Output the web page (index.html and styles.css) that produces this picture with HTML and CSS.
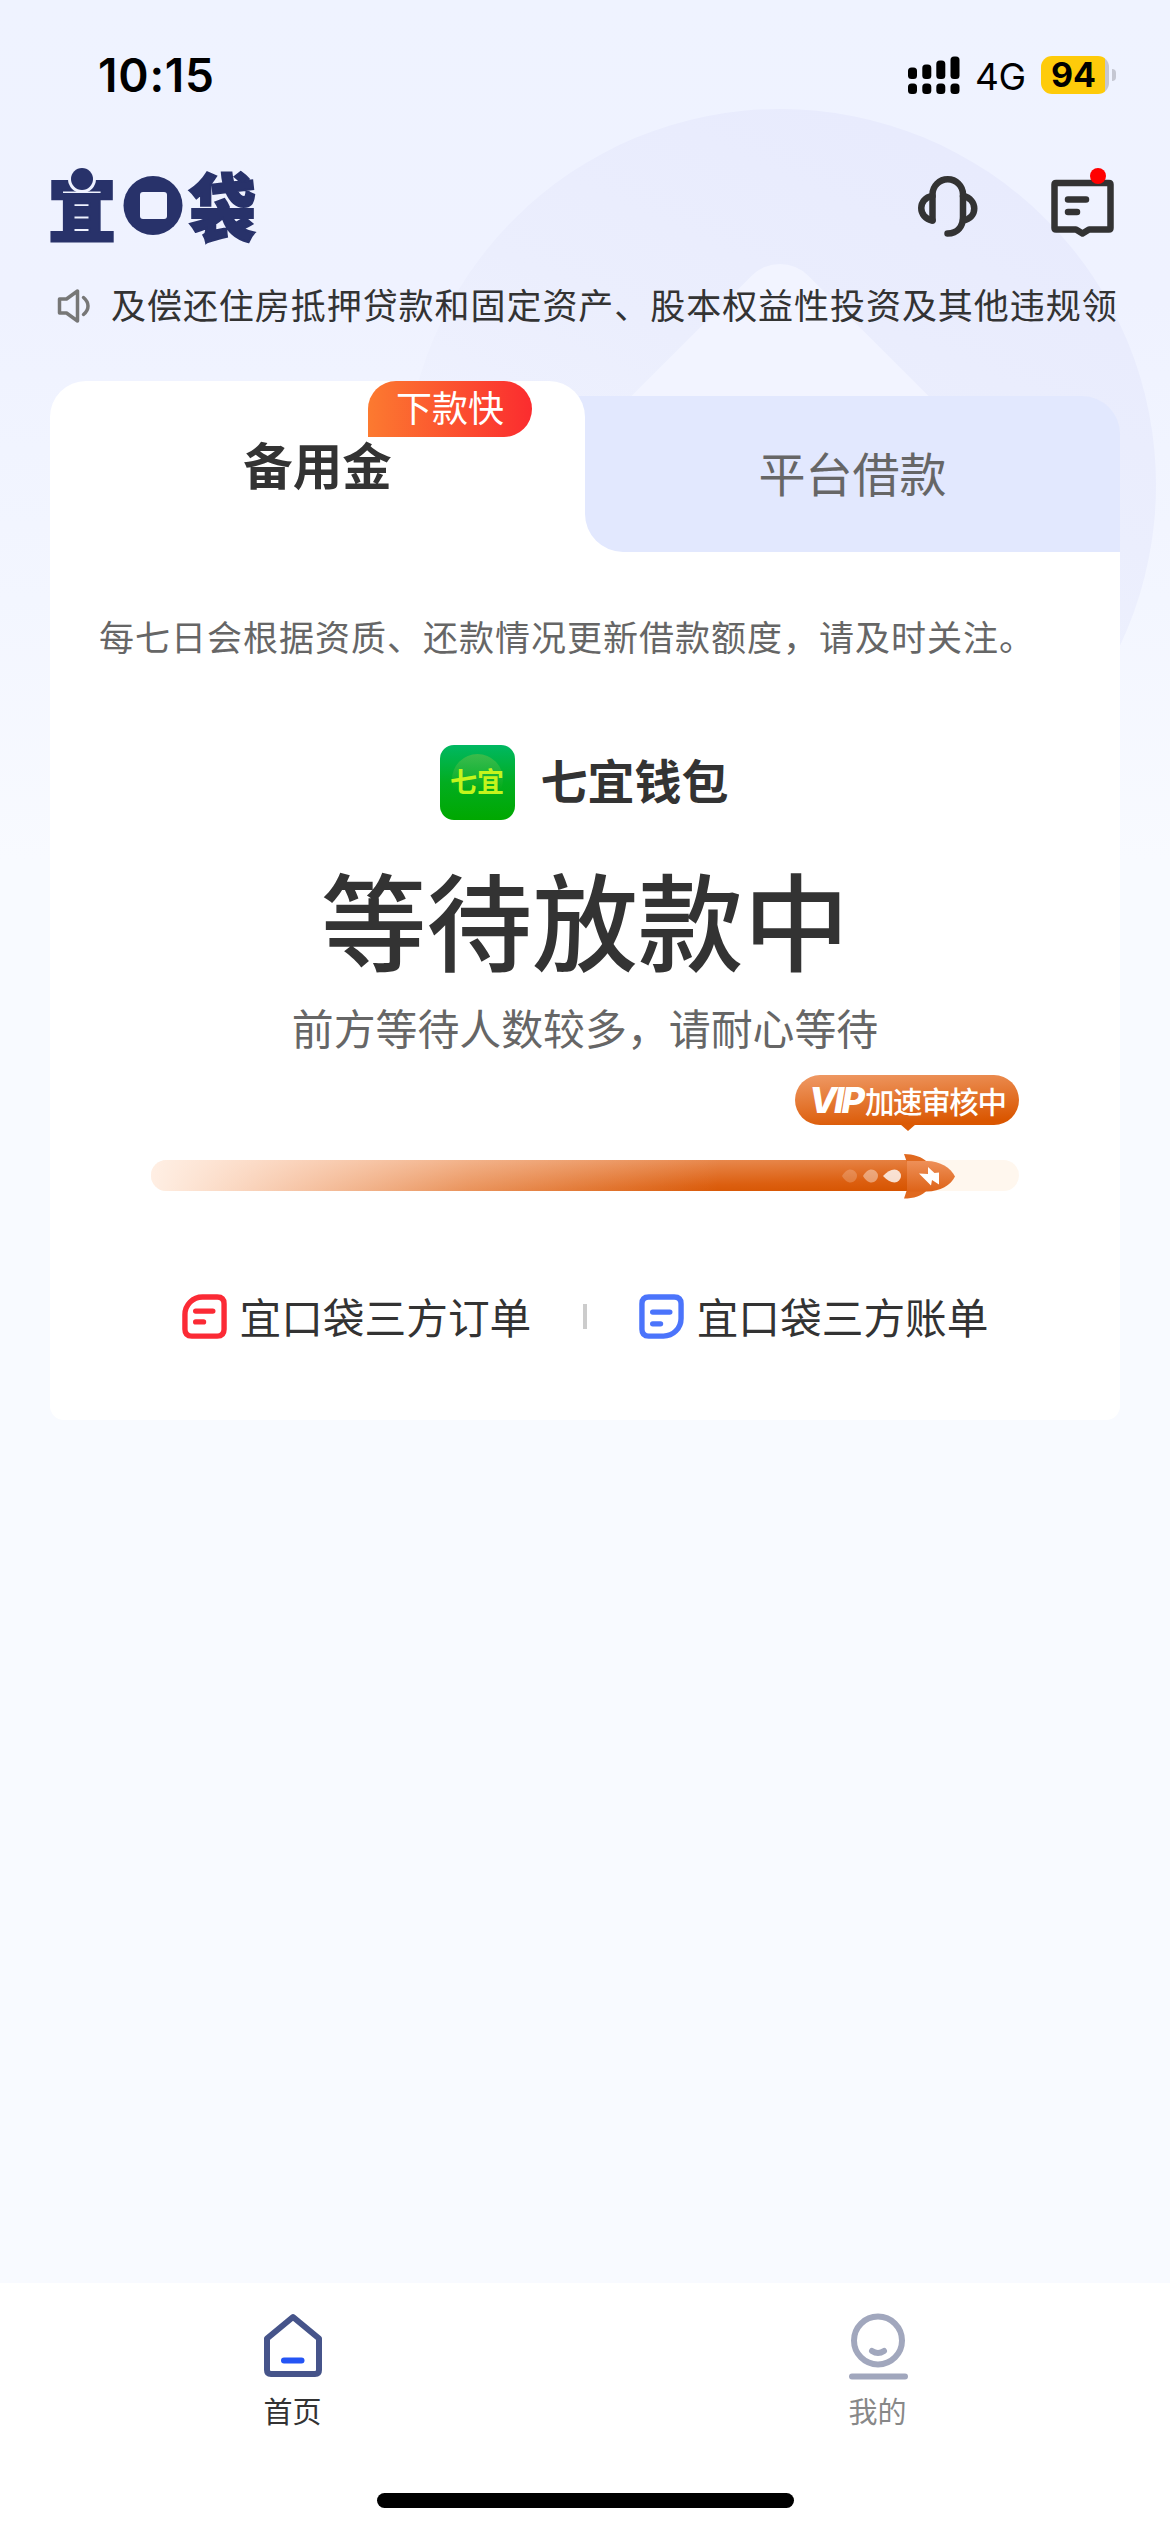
FILE: index.html
```html
<!DOCTYPE html>
<html lang="zh-CN">
<head>
<meta charset="utf-8">
<title>宜口袋</title>
<link rel="stylesheet" href="styles.css">
</head>
<body>
<div class="screen">
  <svg class="backdrop" width="760" height="760" viewBox="0 0 760 760" aria-hidden="true">
    <defs>
      <linearGradient id="disc" x1="0.6" y1="0" x2="0.25" y2="0.75">
        <stop offset="0" stop-color="#e8ebfd"/>
        <stop offset="0.45" stop-color="#ebeefd"/>
        <stop offset="1" stop-color="#f1f4ff"/>
      </linearGradient>
    </defs>
    <circle cx="380" cy="380" r="376" fill="url(#disc)"/>
    <rect x="212" y="212" width="320" height="320" rx="40" fill="#f2f4ff" transform="rotate(45 380 380)"/>
  </svg>

  <header class="status">
    <span class="time">10:15</span>
    <div class="status-right">
      <svg width="52" height="38" viewBox="0 0 52 38">
        <rect x="0" y="11.500" width="9" height="11.500" rx="3.500"/>
        <rect x="14.300" y="8.500" width="9" height="14.500" rx="3.500"/>
        <rect x="28.300" y="4.500" width="9" height="18.500" rx="3.500"/>
        <rect x="42.500" y="0.500" width="9" height="22.500" rx="3.500"/>
        <rect x="0" y="27.500" width="9" height="10.500" rx="3.500"/>
        <rect x="14.300" y="27.500" width="9" height="10.500" rx="3.500"/>
        <rect x="28.300" y="27.500" width="9" height="10.500" rx="3.500"/>
        <rect x="42.500" y="27.500" width="9" height="10.500" rx="3.500"/>
      </svg>
      <span class="network">4G</span>
      <span class="battery">94</span>
      <span class="battery-tip"></span>
    </div>
  </header>

  <div class="topbar">
    <svg class="logo" width="206" height="76" viewBox="0 0 206 76" role="img" aria-label="宜口袋">
      <text class="logo-text" transform="translate(-2 68) scale(1.02 1.08)">宜</text>
      <circle cx="32" cy="11" r="14" fill="#eff2ff"/>
      <circle cx="32" cy="11" r="11"/>
      <circle cx="103" cy="37.500" r="29.500"/>
      <rect x="90" y="24" width="27" height="27" rx="3" fill="#eff2ff"/>
      <text class="logo-text" transform="translate(139 67) scale(1 1.08)">袋</text>
    </svg>
    <div class="actions">
      <svg width="59" height="60" viewBox="0 0 59 60" class="line-icon">
        <path d="M14.500 44.500V18.500a15.250 15.250 0 0 1 30.500 0V41c0 9-5 16.500-15.500 16.500"/>
        <path d="M14.500 20C-0.500 22-0.500 42 14.500 44.500M45 20c15 3 15 22 0 24.500"/>
      </svg>
      <div class="message">
        <svg width="63" height="56" viewBox="0 0 63 56" class="line-icon">
          <path d="M5 3h53q1.500 0 1.500 1.500V48q0 1.500-1.500 1.500H38l-6.500 4-6.500-4H5Q3.500 49.500 3.500 48V4.500Q3.500 3 5 3z"/>
          <path d="M17 19.500h18M17 32h9"/>
        </svg>
        <span class="dot"></span>
      </div>
    </div>
  </div>

  <div class="notice">
    <svg width="36" height="34" viewBox="0 0 36 34">
      <path d="M2.500 10h7L20.500 2v30L9.500 24h-7z"/>
      <path d="M26.500 8.500c6 5 6 12 0 17"/>
    </svg>
    <span>及偿还住房抵押贷款和固定资产、股本权益性投资及其他违规领</span>
  </div>

  <main class="card">
    <nav class="tabs">
      <div class="tab tab-active">备用金<span class="badge">下款快</span></div>
      <div class="tab-slot"><div class="tab tab-other">平台借款</div></div>
    </nav>
    <section class="panel">
      <p class="tip">每七日会根据资质、还款情况更新借款额度，请及时关注。</p>
      <div class="product">
        <div class="product-icon"><span>七宜</span></div>
        <strong>七宜钱包</strong>
      </div>
      <h1>等待放款中</h1>
      <p class="sub">前方等待人数较多，请耐心等待</p>
      <div class="progress">
        <div class="bubble"><b>VIP</b><span>加速审核中</span></div>
        <div class="track">
          <div class="fill">
            <svg width="60" height="14" viewBox="0 0 60 14" fill="#fff">
              <path opacity=".2" d="M0 7C2.500 3 5 .5 8.500 .5a6.500 6.500 0 0 1 0 13C5 13.500 2.500 11 0 7z"/>
              <path opacity=".4" d="M21 7c2.500-4 5-6.500 8.500-6.500a6.500 6.500 0 0 1 0 13C26 13.500 23.500 11 21 7z"/>
              <path opacity=".8" d="M41 7c4-4 7.500-6.500 11.500-6.500a6.500 6.500 0 0 1 0 13C48.500 13.500 45 11 41 7z"/>
            </svg>
          </div>
          <svg class="rocket" width="53" height="46" viewBox="0 0 53 46">
            <defs>
              <linearGradient id="hull" x1="0" y1="0" x2="0" y2="1">
                <stop offset="0" stop-color="#ee9058"/>
                <stop offset="1" stop-color="#de6318"/>
              </linearGradient>
            </defs>
            <path fill="#e0691f" d="M1 1c9 0 19 3 23 8v28c-4 6-14 8.500-23 8.500l3-9v-27z"/>
            <path fill="url(#hull)" d="M4 8h20c13 0 24 7 28 15.500C48 32 37 38.500 24 38.500H4z"/>
            <path fill="#fff" d="M16 20.500l9 .5V14l6.500 6 4.500-.5v12l-7-4.500-1 5.500z"/>
          </svg>
        </div>
      </div>
      <div class="links">
        <a class="link">
          <svg width="45" height="45" viewBox="0 0 46 46" class="order">
            <path d="M21 3h15q7 0 7 7v26q0 7-7 7H10q-7 0-7-7V21A18 18 0 0 1 21 3z"/>
            <path d="M14 17.500h17.500M14 28.500h8"/>
          </svg>
          <span>宜口袋三方订单</span>
        </a>
        <i class="divider"></i>
        <a class="link">
          <svg width="45" height="45" viewBox="0 0 46 46" class="bill">
            <path d="M10 3h26q7 0 7 7v15A18 18 0 0 1 25 43H10q-7 0-7-7V10q0-7 7-7z"/>
            <path d="M14 18.500h17.500M14 30.500h8"/>
          </svg>
          <span>宜口袋三方账单</span>
        </a>
      </div>
    </section>
  </main>

  <footer class="tabbar">
    <div class="tabbar-items">
      <div class="item item-on">
        <svg width="64" height="68" viewBox="0 0 64 68">
          <path d="M6 25.500L32 4 58 25.500V57q0 4-4 4H10Q6 61 6 57z" stroke="#46548a"/>
          <path d="M23 47.500h17.500" stroke="#2454f5"/>
        </svg>
        <span>首页</span>
      </div>
      <div class="item">
        <svg width="64" height="68" viewBox="0 0 64 68" stroke="#a1a7bd">
          <circle cx="32" cy="27.500" r="24"/>
          <path d="M26 38q6 4 12 0M6 63.500h53"/>
        </svg>
        <span>我的</span>
      </div>
    </div>
    <div class="home-indicator"></div>
  </footer>
</div>
</body>
</html>
```
FILE: styles.css
```css
* { box-sizing: border-box; }

body {
  margin: 0;
  font-family: "Noto Sans CJK SC", sans-serif;
  color: #333;
}

.screen {
  position: relative;
  display: flex;
  flex-direction: column;
  width: 1170px;
  height: 2532px;
  overflow: hidden;
  background: linear-gradient(180deg, #eff3ff 0, #eff2ff 300px, #f3f6ff 600px, #f8faff 860px);
}

.screen > * { position: relative; }

.screen > .backdrop {
  position: absolute;
  left: 400px;
  top: 105px;
}

svg { display: block; overflow: visible; }

.status {
  display: flex;
  justify-content: space-between;
  align-items: center;
  height: 150px;
  padding: 0 54px 0 98px;
  font-family: Inter, sans-serif;
  color: #000;
}

.time { font-size: 46px; font-weight: 600; letter-spacing: 0.8px; }

.status-right { display: flex; align-items: center; }

.network { width: 66px; padding-left: 15px; font-size: 37px; letter-spacing: -0.5px; margin-right: 15px; margin-top: 2px; }

.battery {
  width: 68px;
  height: 38px;
  padding-right: 3px;
  border-radius: 11px;
  background: linear-gradient(90deg, #fecb0a 64px, #c5c7d2 64px);
  font-size: 34px;
  font-weight: 700;
  line-height: 38px;
  text-align: center;
}

.battery-tip {
  width: 4px;
  height: 12px;
  margin-left: 3px;
  border-radius: 0 6px 6px 0;
  background: #c5c7d2;
}

.topbar {
  display: flex;
  justify-content: space-between;
  height: 126px;
  padding: 18px 56px 0 50px;
}

.logo { fill: #28326a; }
.logo-text { font-size: 67px; font-weight: 900; stroke: #28326a; stroke-width: 2px; }

.actions { display: flex; gap: 74px; padding-top: 8px; }

.line-icon {
  fill: none;
  stroke: #333;
  stroke-width: 6.5px;
  stroke-linecap: round;
  stroke-linejoin: round;
}

.message { position: relative; padding-top: 4px; }

.dot {
  position: absolute;
  top: -8px;
  right: 8px;
  width: 16px;
  height: 16px;
  border-radius: 50%;
  background: #f00;
}

.notice {
  display: flex;
  align-items: center;
  gap: 18px;
  height: 60px;
  padding-left: 57px;
  font-size: 35px;
  letter-spacing: 0.95px;
  line-height: 56px;
  white-space: nowrap;
}

.notice span { height: 60px; }

.notice svg {
  fill: none;
  stroke: #777;
  stroke-width: 3.5px;
  stroke-linecap: round;
  stroke-linejoin: round;
}

.card {
  display: flex;
  flex-direction: column;
  width: 1070px;
  height: 1039px;
  margin: 45px 50px 0;
}

.tabs {
  display: grid;
  grid-template-columns: 535px 535px;
  align-items: end;
  height: 171px;
  background: linear-gradient(#e2e8fe, #e2e8fe) 400px 15px / 200px 80px no-repeat;
}

.tab { text-align: center; font-size: 47px; }

.tab-active {
  position: relative;
  height: 171px;
  border-radius: 36px 36px 0 0;
  background: #fff;
  font-size: 49.5px;
  font-weight: 700;
  line-height: 165px;
}

.tab-slot { background: linear-gradient(#fff, #fff) 0 100% / 100px 50px no-repeat; }

.tab-other {
  height: 156px;
  border-radius: 0 38px 0 38px;
  background: #e2e8fe;
  color: #666;
  line-height: 151px;
}

.badge {
  position: absolute;
  left: 318px;
  top: 0;
  width: 164px;
  height: 56px;
  border-radius: 28px 28px 28px 0;
  background: linear-gradient(90deg, #fc7a30, #fb2c2f);
  color: #fff;
  font-size: 36px;
  font-weight: 400;
  line-height: 51px;
}

.panel {
  flex: 1;
  display: flex;
  flex-direction: column;
  align-items: center;
  border-radius: 0 0 14px 14px;
  background: #fff;
}

.tip {
  align-self: stretch;
  margin: 54px 0 0 49px;
  font-size: 35px;
  letter-spacing: 1px;
  line-height: 60px;
  color: #666;
  white-space: nowrap;
}

.product {
  display: flex;
  align-items: center;
  gap: 26px;
  margin: 78px 2px 0 0;
  font-size: 47px;
  line-height: 69px;
}

.product strong { height: 77px; font-weight: 700; }

.product-icon {
  width: 75px;
  height: 75px;
  padding: 9px 12px;
  border-radius: 14px;
  background: linear-gradient(180deg, #00b862 0, #02ad20 50%, #00a800 100%);
}

.product-icon span {
  display: flex;
  justify-content: center;
  width: 51px;
  height: 51px;
  border-radius: 50%;
  background: linear-gradient(180deg, rgba(90, 190, 70, 0.65), rgba(60, 180, 40, 0) 70%);
  color: #c4f51c;
  font-size: 27px;
  font-weight: 700;
  line-height: 53px;
  white-space: nowrap;
}

h1 {
  margin: 31px 0 0;
  font-size: 105.6px;
  font-weight: 500;
  line-height: 130px;
}

.sub {
  margin: 12px 0 0;
  font-size: 41.9px;
  line-height: 66px;
  color: #666;
}

.progress {
  display: flex;
  flex-direction: column;
  align-items: flex-end;
  width: 868px;
  margin-top: 15px;
}

.bubble {
  position: relative;
  display: flex;
  align-items: center;
  width: 224px;
  height: 50px;
  padding-left: 14px;
  border-radius: 25px;
  background: linear-gradient(176deg, #ef9a66 0, #da5600 90%);
  color: #fff;
  white-space: nowrap;
}

.bubble::after {
  content: "";
  position: absolute;
  left: 105px;
  top: 49px;
  border: 8px solid transparent;
  border-top: 7px solid #db5a05;
  border-bottom: 0;
}

.bubble b {
  width: 56px;
  font: italic 800 36px/50px Inter, sans-serif;
  letter-spacing: -2.8px;
}

.bubble span { font-size: 29.5px; line-height: 47px; letter-spacing: -1.4px; font-weight: 500; }

.track {
  display: flex;
  align-items: center;
  align-self: stretch;
  height: 31px;
  margin-top: 35px;
  border-radius: 16px;
  background: #fff7ee;
}

.fill {
  display: flex;
  align-items: center;
  justify-content: flex-end;
  width: 757px;
  height: 31px;
  padding-right: 6px;
  border-radius: 16px 0 0 16px;
  background:
    linear-gradient(94deg, #ffefe4 0, rgba(255, 232, 218, 0.72) 20%, rgba(255, 230, 212, 0.38) 42%, rgba(255, 230, 210, 0) 75%),
    linear-gradient(178.5deg, #efa070 0, #dc5f10 78%, #d65400 100%);
}

.rocket { margin-left: -5px; }

.links {
  display: flex;
  align-items: center;
  justify-content: space-between;
  width: 807px;
  margin-top: 95px;
  font-size: 41.7px;
  line-height: 60px;
}

.link { display: flex; align-items: center; gap: 13px; }
.link svg { fill: none; stroke-width: 5.5px; stroke-linecap: round; }
.order { stroke: #fb2a35; }
.bill { stroke: #4b74fb; }

.divider { width: 4px; height: 25px; background: #ccc; }

.tabbar {
  display: flex;
  flex-direction: column;
  align-items: center;
  justify-content: space-between;
  height: 249px;
  margin-top: auto;
  padding: 30px 0 24px;
  background: #fff;
}

.tabbar-items { display: flex; width: 100%; }

.item {
  flex: 1;
  display: flex;
  flex-direction: column;
  align-items: center;
  font-size: 29px;
  line-height: 44px;
  color: #888;
  gap: 7px;
}

.item svg { fill: none; stroke-width: 6px; stroke-linecap: round; stroke-linejoin: round; }
.item-on { color: #333; }

.home-indicator { width: 417px; height: 15px; border-radius: 8px; background: #000; }
```
